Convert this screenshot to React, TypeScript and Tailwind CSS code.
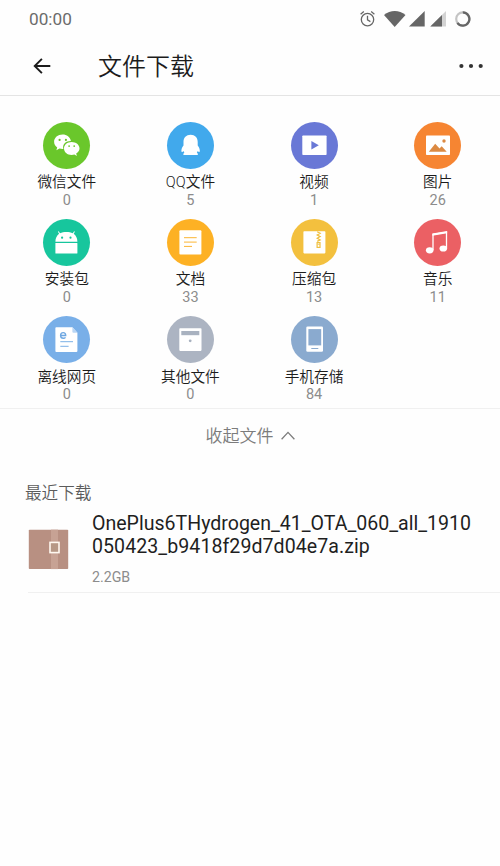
import React from 'react';

// Glyphs of the category tiles, drawn on a 47x47 coloured disc
const Icons = {
    WeChat: () => (
        <>
            <path fill="#fff" d="M19.6 12.6c-4.8 0-8.5 3.2-8.5 7.2 0 2.3 1.2 4.3 3.1 5.6l-.8 2.8 3.1-1.7c1 .3 2 .4 3.1.4h.8c-.2-.6-.3-1.1-.3-1.7 0-3.5 3.2-6.3 7.3-6.3h.5c-.7-3.6-4.1-6.3-8.3-6.3z" />
            <path fill="#fff" d="M28.6 20.1c-4.3 0-7.6 2.8-7.6 6.4s3.3 6.5 7.6 6.5c1 0 1.9-.2 2.800-.5l2.500 1.500-.7-2.500c2-1.200 3.300-3 3.300-5 0-3.600-3.500-6.400-7.900-6.400z" />
            <g fill="#6ac72b">
                <circle cx="16.600" cy="17.900" r="1.100" />
                <circle cx="22.900" cy="17.900" r="1.100" />
                <circle cx="26.100" cy="24.100" r=".9" />
                <circle cx="31.200" cy="24.100" r=".9" />
            </g>
        </>
    ),
    QQ: () => (
        <path fill="#fff" d="M23.6 12.8c-4.4 0-7.100 2.900-7.100 7.300v3.300c-1.300 1.700-2.100 3.500-2.100 5.200 0 1.300.4 1.700.9 1.500.5-.2.900-.5 1.200-1 .3.700.5 1.200.9 1.700-.7.300-1 .8-1 1.300v.9h14.400v-.9c0-.5-.3-1-1-1.300.4-.5.6-1 .9-1.700.3.500.7.800 1.200 1 .5.200.9-.2.900-1.500 0-1.700-.8-3.500-2.100-5.200v-3.300c0-4.400-2.700-7.300-7.100-7.300z" />
    ),
    Video: () => (
        <>
            <rect x="11.300" y="13.500" width="24.300" height="19.500" rx=".8" fill="#fff" />
            <path d="M20.400 19v8.600l7.400-4.300z" fill="#6978d6" />
        </>
    ),
    Image: () => (
        <>
            <rect x="12" y="13.500" width="24" height="19.500" rx=".8" fill="#fff" />
            <circle cx="30" cy="19" r="1.700" fill="#dc8a42" />
            <path d="M14.800 29.700l6.400-7.900 4.300 4.600 2.200-2.200 5 5.500z" fill="#dc8a42" />
        </>
    ),
    Android: () => (
        <>
            <path d="M12.400 22.800c0-3.500 1.300-6.100 3.700-8l-1.200-2 .8-.5 1.300 2c1.900-.9 4-1.300 6.400-1.300s4.500.4 6.400 1.300l1.300-2 .8.5-1.200 2c2.400 1.900 3.700 4.500 3.700 8z" fill="#fff" />
            <rect x="12.400" y="24.100" width="22" height="10.300" rx=".5" fill="#fff" />
            <circle cx="19.100" cy="18.700" r="1.100" fill="#17c69d" />
            <circle cx="27.500" cy="18.700" r="1.100" fill="#17c69d" />
        </>
    ),
    Doc: () => (
        <>
            <rect x="12.400" y="11.200" width="22" height="24.200" rx="1" fill="#fff" />
            <path d="M17 18.700h12.700M17 23.100h12.700M17 27.400h8" stroke="#fbb534" strokeWidth="1" />
        </>
    ),
    Zip: () => (
        <>
            <rect x="12.400" y="12.200" width="22" height="22.200" rx=".8" fill="#fff" />
            <path d="M26.200 12.800l3 1.500-3 1.700 3 1.600-3 1.700 3 1.600-3 1.500" stroke="#f0c040" strokeWidth="1.200" fill="none" />
            <rect x="26.100" y="23.600" width="2.900" height="4.800" stroke="#f0c040" strokeWidth="1.200" fill="none" />
            <path d="M26.500 25.300h2.300" stroke="#f0c040" strokeWidth=".8" />
        </>
    ),
    Music: () => (
        <>
            <path d="M19 31V15.400l13.500-2.200v16.400" stroke="#fff" strokeWidth="1.300" fill="none" />
            <path d="M18.400 14.500l14.700-2.400v2.200l-14.700 2.400z" fill="#fff" />
            <ellipse cx="15.700" cy="31.300" rx="3.800" ry="3.100" fill="#fff" />
            <ellipse cx="29.300" cy="29.500" rx="3.800" ry="3.100" fill="#fff" />
        </>
    ),
    WebPage: () => (
        <>
            <path d="M13.200 11.200h16.200l5 5.600v18.100a1 1 0 01-1 1H13.400a1 1 0 01-1-1V12a.8.8 0 01.8-.8z" fill="#fff" />
            <path d="M29.400 11.200v4.600a1 1 0 001 1h4z" fill="#b9d6f5" />
            <path d="M17.800 19.500h4.900c0-1.800-1-2.900-2.500-2.900s-2.600 1.200-2.600 2.900 1.100 2.800 2.700 2.800c1 0 1.700-.3 2.200-1" stroke="#6fa8e2" strokeWidth="1.400" fill="none" />
            <path d="M17.300 25.700h12.700M17.300 30.300h8.300" stroke="#7bb0e6" strokeWidth="1" />
        </>
    ),
    Other: () => (
        <>
            <rect x="12.300" y="12.200" width="22.200" height="22.700" rx=".8" fill="#fff" />
            <rect x="14.300" y="15" width="18" height="4.200" fill="#a9b2c0" />
            <circle cx="23.200" cy="24.800" r="1.400" fill="#a9b2c0" />
        </>
    ),
    Phone: () => (
        <>
            <rect x="15.300" y="10.500" width="16.700" height="25.200" rx="1.300" fill="#fff" />
            <rect x="17.400" y="13.100" width="12.800" height="16.300" fill="#8aaacf" />
            <path d="M20.300 32.500h7" stroke="#8aaacf" strokeWidth="1" />
        </>
    ),
};

const categories = [
    { label: '微信文件', count: 0, color: 'bg-[#6ac72b]', icon: <Icons.WeChat /> },
    { label: 'QQ文件', count: 5, color: 'bg-[#41a9ec]', icon: <Icons.QQ /> },
    { label: '视频', count: 1, color: 'bg-[#6978d6]', icon: <Icons.Video /> },
    { label: '图片', count: 26, color: 'bg-[#f68532]', icon: <Icons.Image /> },
    { label: '安装包', count: 0, color: 'bg-[#17c69d]', icon: <Icons.Android /> },
    { label: '文档', count: 33, color: 'bg-[#fdb124]', icon: <Icons.Doc /> },
    { label: '压缩包', count: 13, color: 'bg-[#f3c03e]', icon: <Icons.Zip /> },
    { label: '音乐', count: 11, color: 'bg-[#eb6064]', icon: <Icons.Music /> },
    { label: '离线网页', count: 0, color: 'bg-[#79afe8]', icon: <Icons.WebPage /> },
    { label: '其他文件', count: 0, color: 'bg-[#acb4c2]', icon: <Icons.Other /> },
    { label: '手机存储', count: 84, color: 'bg-[#8aaacf]', icon: <Icons.Phone /> },
];

const StatusBar: React.FC = () => (
    <div className="flex h-[38px] items-center justify-between pl-[29px] pr-[28px]">
        <span className="pt-px text-[17.2px] text-[#6b6b6b]">00:00</span>
        <svg width="112" height="18" viewBox="0 0 112 18" fill="none">
            {/* alarm */}
            <g stroke="#666" strokeWidth="1.300">
                <circle cx="7.500" cy="9.600" r="6.200" />
                <path d="M7.500 5.800v4.100l2.900 1.700M.6 4.200l3.200-2.700M14.400 4.200l-3.200-2.700" />
            </g>
            {/* wifi */}
            <path d="M24 5c6.300-5.300 15.200-5.300 21.500 0L34.700 16.900z" fill="#666" />
            {/* signal */}
            <path d="M64.700 1v15.600H49z" fill="#666" />
            <path d="M86 1v15.600H70.300z" fill="#d3d3d3" />
            <path d="M82 5v11.600H70.300z" fill="#666" />
            {/* battery */}
            <circle cx="102.800" cy="9" r="6.600" stroke="#c4c4c4" strokeWidth="2.200" />
            <path d="M102.800 2.400a6.600 6.600 0 11-5.400 10.400" stroke="#666" strokeWidth="2.200" />
        </svg>
    </div>
);

const App: React.FC = () => {
    return (
        <div className="min-h-[866px] w-full bg-[#fefefe] font-['Roboto','Noto_Sans_CJK_SC',sans-serif]">
            <StatusBar />

            {/* Title bar */}
            <header className="flex h-[58px] items-center border-b border-[#e4e4e4] pl-[33px] pr-[16px]">
                <svg className="mb-[2px]" width="18" height="16" viewBox="0 0 18 16" fill="none" stroke="#1c1c1c" strokeWidth="1.900">
                    <path d="M8.900.8L1.700 8l7.200 7.200M1.700 8h15.600" />
                </svg>
                <h1 className="ml-[47px] text-[24px] leading-8 font-[350] text-[#1c1c1c]">文件下载</h1>
                <svg className="mb-[2px] ml-auto" width="26" height="6" viewBox="0 0 26 6" fill="#333">
                    <circle cx="3.400" cy="3" r="2.100" />
                    <circle cx="13" cy="3" r="2.100" />
                    <circle cx="22.700" cy="3" r="2.100" />
                </svg>
            </header>

            {/* Categories */}
            <section className="grid h-[313px] w-[499.5px] auto-rows-[97.2px] grid-cols-4 content-start border-b border-[#f0f0f0] pl-[5px] pt-[26px]">
                {categories.map(item => (
                    <div key={item.label} className="flex flex-col items-center">
                        <div className={`h-[47px] w-[47px] rounded-full ${item.color}`}>
                            <svg width="47" height="47" viewBox="0 0 47 47">{item.icon}</svg>
                        </div>
                        <span className="mt-[3.3px] text-[14.7px] leading-5 font-[350] text-[#1c1c1c]">{item.label}</span>
                        <span className="mt-[0.7px] text-[14.5px] leading-4 text-[#8c8c8c]">{item.count}</span>
                    </div>
                ))}
            </section>

            <button className="flex h-[52px] w-full items-center justify-center gap-[7px] text-[17px] font-[350] text-[#7c7c7c]">
                <span className="pt-[4px]">收起文件</span>
                <svg className="mt-px" width="14" height="9" viewBox="0 0 14 9" fill="none" stroke="#7c7c7c" strokeWidth="1.300">
                    <path d="M.6 8.200L7 1.400l6.400 6.800" />
                </svg>
            </button>

            {/* Recent downloads */}
            <section>
                <h2 className="mt-[21px] pl-[25px] text-[16.6px] leading-6 font-[350] text-[#5c5c5c]">最近下载</h2>
                <div className="ml-[28px] flex h-[87px] border-b border-[#f0f0f0]">
                    <svg className="mt-[23px] shrink-0" width="41" height="41" viewBox="0 0 41 41">
                        <rect x=".8" y=".7" width="39.400" height="39.400" rx=".8" fill="#b89082" />
                        <path d="M23 .7h7v39.400h-7z" fill="#c7a294" />
                        <rect x="22" y="13.400" width="9" height="10.200" fill="#b79886" stroke="#fff8f0" strokeWidth="1.600" />
                    </svg>
                    <div className="ml-[23px] mt-[6px]">
                        <p className="w-[390px] text-[19.56px] leading-[23px] text-[#1f1f1f]">
                            OnePlus6THydrogen_41_OTA_060_all_1910
                            <br />
                            <span className="tracking-[0.07px]">050423_b9418f29d7d04e7a.zip</span>
                        </p>
                        <p className="mt-[9px] text-[14.2px] leading-5 text-[#8c8c8c]">2.2GB</p>
                    </div>
                </div>
            </section>
        </div>
    );
};

export default App;
